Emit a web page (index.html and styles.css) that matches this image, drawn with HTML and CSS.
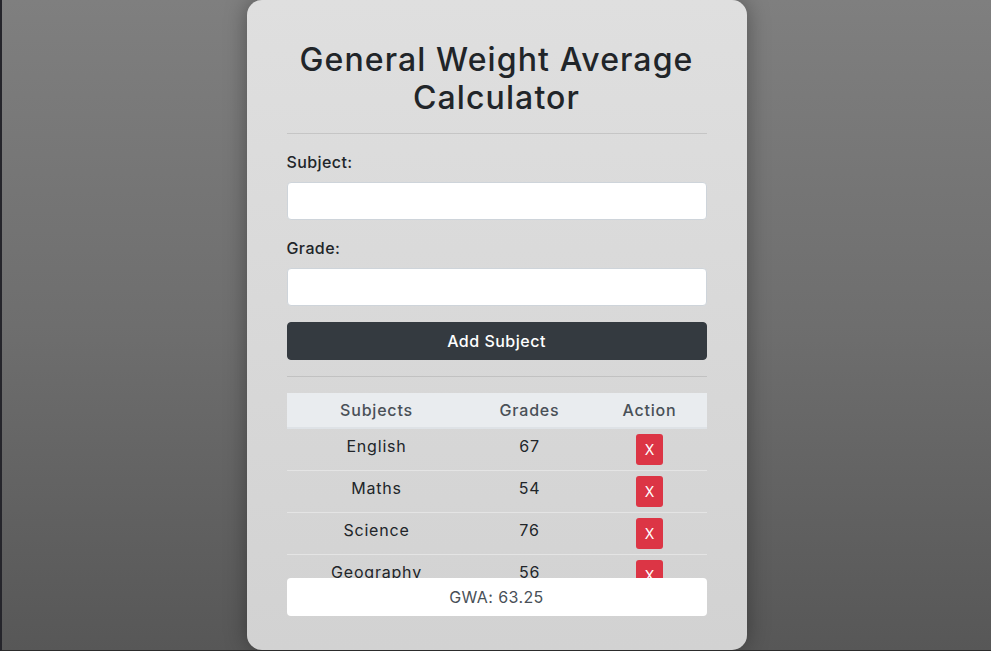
FILE: index.html
```html
<!DOCTYPE html>
<html lang="en">
<head>
<meta charset="utf-8">
<title>General Weight Average Calculator</title>
<link rel="stylesheet" href="styles.css">
</head>
<body>
<main class="card">
  <h1 class="title">General Weight Average Calculator</h1>
  <hr class="rule">
  <label class="label" for="subject">Subject:</label>
  <input class="field" id="subject" type="text">
  <label class="label" for="grade">Grade:</label>
  <input class="field" id="grade" type="text">
  <button class="add-btn" type="button">Add Subject</button>
  <hr class="rule">
  <div class="table-wrap">
    <table class="grades">
      <colgroup><col class="c1"><col class="c2"><col class="c3"></colgroup>
      <thead>
        <tr><th>Subjects</th><th>Grades</th><th>Action</th></tr>
      </thead>
      <tbody>
        <tr><td>English</td><td>67</td><td><button class="del" type="button">X</button></td></tr>
        <tr><td>Maths</td><td>54</td><td><button class="del" type="button">X</button></td></tr>
        <tr><td>Science</td><td>76</td><td><button class="del" type="button">X</button></td></tr>
        <tr><td>Geography</td><td>56</td><td><button class="del" type="button">X</button></td></tr>
      </tbody>
    </table>
  </div>
  <div class="gwa">GWA: 63.25</div>
</main>
</body>
</html>
```

FILE: styles.css
```css
* { box-sizing: border-box; }
html, body { margin: 0; padding: 0; }
body {
  height: 100vh;
  overflow: hidden;
  border-left: 2px solid #25252b;
  border-bottom: 1px solid #2c2c2c;
  background: linear-gradient(to bottom, #7f7f7f 0%, #6e6e6e 50%, #575757 100%);
  font-family: Inter, "Open Sans", sans-serif;
  letter-spacing: 0.4px;
  color: #212529;
  display: flex;
  justify-content: center;
  align-items: flex-start;
}
.card {
  width: 500px;
  height: 650px;
  background: linear-gradient(to bottom, #dfdfdf, #d2d2d2);
  border-radius: 15px;
  box-shadow: 0 0 22px rgba(0, 0, 0, 0.35);
  padding: 41px 40px 34px;
  display: flex;
  flex-direction: column;
}
.title {
  margin: 0;
  font-size: 32px;
  font-weight: 500;
  line-height: 38px;
  letter-spacing: 1.1px;
  text-align: center;
  color: #212529;
}
.rule {
  margin: 16px 0;
  border: 0;
  border-top: 1px solid rgba(0, 0, 0, 0.1);
  height: 0;
  flex: none;
}
.label {
  display: block;
  font-size: 16px;
  line-height: 24px;
  font-weight: 500;
  margin-bottom: 8px;
}
.field {
  display: block;
  width: 100%;
  height: 38px;
  margin: 0 0 16px;
  border: 1px solid #ced4da;
  border-radius: 4px;
  background: #fff;
  flex: none;
}
.add-btn {
  width: 100%;
  height: 38px;
  border: 1px solid #343a40;
  border-radius: 4px;
  background: #343a40;
  color: #fff;
  font-family: inherit;
  font-size: 16px;
  font-weight: 500;
  letter-spacing: 0.5px;
  flex: none;
}
.table-wrap {
  flex: 1 1 auto;
  min-height: 0;
  overflow: hidden;
}
.grades {
  width: 100%;
  border-collapse: collapse;
  table-layout: fixed;
}
.c1 { width: 180px; }
.c2 { width: 126px; }
.c3 { width: 114px; }
.grades th {
  background: #e9ecef;
  color: #495057;
  font-weight: 500;
  font-size: 16px;
  line-height: 24px;
  letter-spacing: 0.8px;
  padding: 5px;
  border-bottom: 2px solid #dee2e6;
  text-align: center;
}
.grades td {
  font-size: 16px;
  line-height: 24px;
  letter-spacing: 0.8px;
  padding: 5px;
  text-align: center;
  vertical-align: top;
  border-top: 1px solid #e4e4e4;
  color: #212529;
}
.grades tbody tr:first-child td { border-top: 0; }
.del {
  width: 27px;
  height: 31px;
  padding: 0;
  border: 0;
  border-radius: 3px;
  background: #dc3545;
  color: #fff;
  font-family: inherit;
  font-size: 14px;
  line-height: 31px;
  letter-spacing: 0;
}
.gwa {
  height: 38px;
  flex: none;
  background: #fff;
  border-radius: 4px;
  color: #495057;
  font-size: 16px;
  line-height: 38px;
  text-align: center;
}
```
